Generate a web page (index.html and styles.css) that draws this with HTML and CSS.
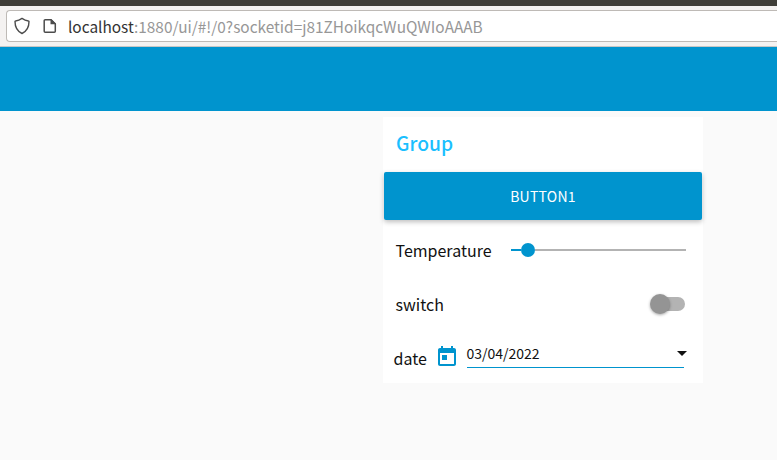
FILE: index.html
```html
<!DOCTYPE html>
<html lang="en">
<head>
<meta charset="utf-8">
<title>Dashboard</title>
<link rel="stylesheet" href="styles.css">
</head>
<body>
<div class="browser">
  <div class="address">
    <svg class="shield" viewBox="0 0 16 18" width="16" height="18"><path d="M8 1.400C6.200 2.700 3.800 3.700 1.500 4c-.3 0-.5.3-.5.6C1 10.500 3.500 14.500 8 16.500c4.500-2 7-6 7-11.900 0-.3-.2-.6-.5-.6C12.200 3.700 9.800 2.700 8 1.400Z" fill="none" stroke="#4c4c4c" stroke-width="1.400" stroke-linejoin="round"/></svg>
    <svg class="page" viewBox="0 0 14 16" width="14" height="16"><path d="M8 1.700H2.200a1 1 0 0 0-1 1v10.600a1 1 0 0 0 1 1h9.100a1 1 0 0 0 1-1V6Z" fill="none" stroke="#4c4c4c" stroke-width="1.500" stroke-linejoin="round"/><path d="M7.500 1.200H8.500L12.900 5.500V6.200H7.500Z" fill="#4c4c4c"/></svg>
    <span class="url"><b>localhost</b>:1880/ui/#!/0?socketid=j81ZHoikqcWuQWIoAAAB</span>
  </div>
</div>
<header class="header"></header>
<main class="card">
  <h1 class="title">Group</h1>
  <button class="button">BUTTON1</button>
  <div class="row slider-row">
    <span>Temperature</span>
    <div class="slider"><i class="fill"></i><i class="knob"></i><i class="rail"></i></div>
  </div>
  <div class="row switch-row">
    <span>switch</span>
    <div class="switch"><i class="thumb"></i></div>
  </div>
  <div class="row date-row">
    <span>date</span>
    <svg class="calendar" viewBox="0 0 24 24" width="24" height="24"><path fill="#0094ce" d="M19 3h-1V1h-2v2H8V1H6v2H5c-1.110 0-1.990.9-1.990 2L3 19c0 1.100.89 2 2 2h14c1.100 0 2-.9 2-2V5c0-1.100-.9-2-2-2zm0 16H5V8h14v11zM7 10h5v5H7z"/></svg>
    <div class="date-input"><span>03/04/2022</span><i class="arrow"></i></div>
  </div>
</main>
</body>
</html>
```

FILE: styles.css
```css
* { box-sizing: border-box; }
body {
  margin: 0;
  height: 460px;
  overflow: hidden;
  background: #fafafa;
  color: #111;
  font: 16px/24px "Noto Sans CJK SC", "Noto Sans", sans-serif;
}
.browser {
  height: 47px;
  padding: 4px 0 0 6px;
  border-top: 6px solid #3f3e38;
  border-bottom: 1px solid #c8c7c5;
  background: #f4f2f1;
}
.address {
  display: flex;
  align-items: center;
  height: 32px;
  padding-left: 7px;
  border: 1px solid #bebab6;
  border-right: 0;
  border-radius: 4px 0 0 4px;
  background: #fff;
}
.page { margin-left: 13px; }
.url {
  margin-left: 11px;
  color: #979797;
  font-size: 15.4px;
  white-space: nowrap;
}
.url b { color: #333; font-weight: 400; }
.header { height: 64px; background: #0094ce; }
.card {
  width: 320px;
  height: 266px;
  margin: 6px 0 0 383px;
  background: #fff;
}
.title {
  height: 55px;
  margin: 0;
  padding-left: 13px;
  color: #1bbfff;
  font-size: 19.3px;
  font-weight: 500;
  line-height: 52px;
}
.button {
  display: block;
  width: 318px;
  height: 48px;
  margin: 0 1px;
  padding: 0;
  border: 0;
  border-radius: 2px;
  background: #0094ce;
  box-shadow: 0 2px 5px rgba(0, 0, 0, .26);
  color: #fff;
  font: 14px/48px "Noto Sans CJK SC", "Noto Sans", sans-serif;
  letter-spacing: .24px;
}
.row { display: flex; align-items: center; height: 54px; }
.slider-row { height: 60px; padding: 0 17px 0 12.5px; justify-content: space-between; }
.slider { display: flex; align-items: center; width: 175px; height: 14px; }
.fill { width: 10px; height: 2px; background: #0094ce; }
.knob { width: 14px; height: 14px; border-radius: 50%; background: #0094ce; }
.rail { flex: 1; height: 2px; background: #b3b3b3; }
.switch-row { height: 48px; padding: 0 18px 0 12.5px; justify-content: space-between; }
.switch {
  display: flex;
  align-items: center;
  width: 34px;
  height: 14px;
  border-radius: 7px;
  background: #b3b3b3;
}
.thumb {
  width: 20px;
  height: 20px;
  margin-left: -1px;
  border-radius: 50%;
  background: #949494;
  box-shadow: 0 1px 3px rgba(0, 0, 0, .35);
}
.date-row { height: 55px; padding-left: 10.5px; align-items: flex-start; }
.date-row > span { width: 33.5px; margin-top: 18px; }
.calendar { margin: 17px 0 0 8px; }
.date-input {
  display: flex;
  justify-content: space-between;
  width: 217px;
  height: 29px;
  margin: 11px 0 0 8px;
  padding-top: 2px;
  border-bottom: 1px solid #0094ce;
  font-size: 14px;
}
.date-input span { margin-left: -.5px; }
.arrow {
  width: 10px;
  height: 5px;
  margin: 10px -3px 0 0;
  border-top: 5px solid #111;
  border-left: 5px solid transparent;
  border-right: 5px solid transparent;
}
```
